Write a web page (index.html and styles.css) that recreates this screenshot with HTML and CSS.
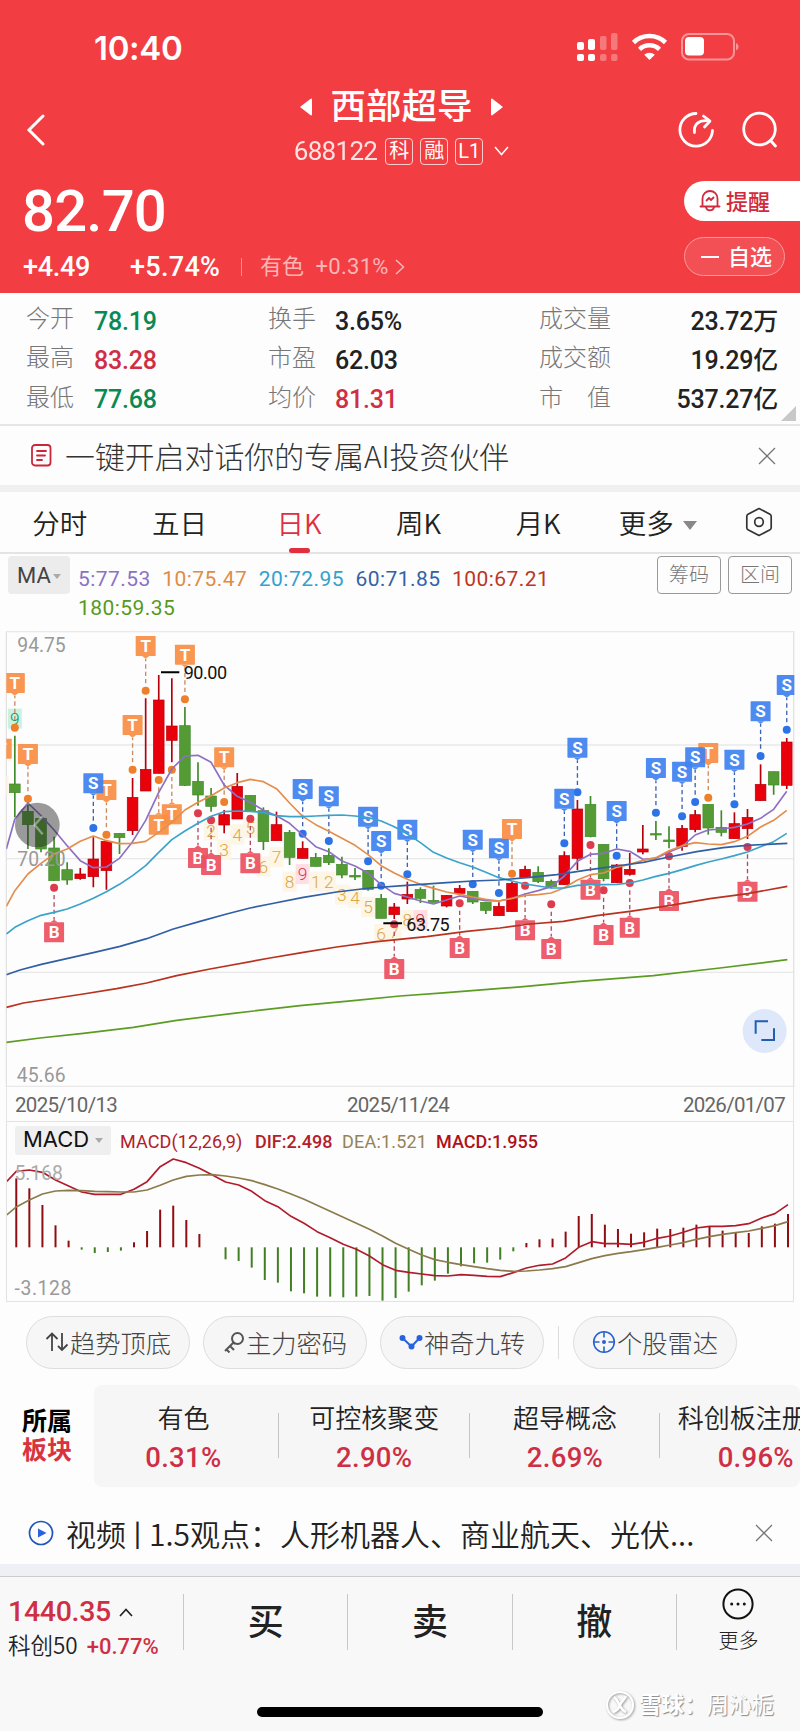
FILE: index.html
```html
<!DOCTYPE html>
<html lang="zh-CN">
<head>
  <meta charset="utf-8">
  <title>西部超导 688122</title>
  <link rel="stylesheet" href="styles.css">
</head>
<body>
  <header class="header">
    <div class="status">
      <span class="time">10:40</span>
      <svg class="status-icons" width="166" height="32" viewBox="0 0 166 32" fill="#fff">
        <rect x="1" y="11" width="7" height="8" rx="2"/>
        <rect x="12" y="8" width="7" height="11" rx="2"/>
        <rect x="1" y="23" width="7" height="7" rx="2"/>
        <rect x="12" y="23" width="7" height="7" rx="2"/>
        <g opacity=".3">
          <rect x="24" y="5" width="6.5" height="14" rx="2"/>
          <rect x="35" y="2" width="6.5" height="17" rx="2"/>
          <rect x="24" y="23" width="6.5" height="7" rx="2"/>
          <rect x="35" y="23" width="6.5" height="7" rx="2"/>
        </g>
        <path d="M73.500 29l-5.300-5.200a7.600 7.600 0 0 1 10.600 0z"/>
        <g fill="none" stroke="#fff" stroke-width="4.600">
          <path d="M57.500 11.500a23 23 0 0 1 32 0"/>
          <path d="M63.500 18.300a14.500 14.500 0 0 1 20 0"/>
        </g>
        <rect x="106" y="3" width="52" height="25.500" rx="7" fill="none" stroke="#fff" stroke-width="2" opacity=".45"/>
        <rect x="109" y="6" width="19" height="18.500" rx="4"/>
        <path d="M160 12a4 4 0 0 1 0 7.500z" opacity=".45"/>
      </svg>
    </div>
    <div class="nav">
      <svg class="back" width="20" height="32" viewBox="0 0 20 32" fill="none" stroke="#fff" stroke-width="3" stroke-linecap="round"><path d="M17 2L3 16l14 14"/></svg>
      <div class="title-block">
        <div class="title">
          <svg width="12" height="18" viewBox="0 0 12 18" fill="#fff"><path d="M11 0.500q1 0 1 1v15q0 1-1 1L.6 9.600q-.8-.6 0-1.200z"/></svg>
          <h1>西部超导</h1>
          <svg width="12" height="18" viewBox="0 0 12 18" fill="#fff"><path d="M1 .5Q0 .5 0 1.500v15q0 1 1 1L11.400 9.600q.8-.6 0-1.200z"/></svg>
        </div>
        <div class="code">
          <span class="num">688122</span>
          <span class="tag">科</span><span class="tag">融</span><span class="tag tag-l">L1</span>
          <svg width="15" height="10" viewBox="0 0 15 10" fill="none" stroke="#fff" stroke-width="1.500"><path d="M1 1l6.500 7.500L14 1"/></svg>
        </div>
      </div>
      <div class="nav-icons">
        <svg width="38" height="38" viewBox="0 0 38 38" fill="none" stroke="#fff" stroke-width="2.800" stroke-linecap="round">
          <path d="M19 2.500A16.300 16.300 0 1 0 35.500 19.500"/>
          <path d="M17.500 21.500c-1-8 4-12.500 13-11.800"/>
          <path d="M26.500 5l6.500 5-5.500 6" stroke-linejoin="round"/>
        </svg>
        <svg width="38" height="38" viewBox="0 0 38 38" fill="none" stroke="#fff" stroke-width="2.800" stroke-linecap="round">
          <circle cx="18.500" cy="18" r="15.800"/><path d="M29.500 29.500l5 5.500"/>
        </svg>
      </div>
    </div>
    <div class="quote">
      <div>
        <div class="price">82.70</div>
        <div class="change">
          <span class="diff">+4.49</span><span class="pct">+5.74%</span>
          <span class="industry">有色 <i>+0.31%</i></span>
          <svg width="10" height="16" viewBox="0 0 10 16" fill="none" stroke="#fff" stroke-width="1.400" opacity=".65"><path d="M1 1l7.500 7L1 15"/></svg>
        </div>
      </div>
      <div class="actions">
        <div class="remind">
          <svg width="22" height="23" viewBox="0 0 22 23" fill="none" stroke="#d02a3c" stroke-width="1.800" stroke-linecap="round" stroke-linejoin="round">
            <path d="M3.500 16.500V9.500a7.500 7.500 0 0 1 15 0v7M1.500 17.500h19M7 18.500a4.200 4.200 0 0 0 8 0M7.500 11.500l2.500-2.500 2 2 2.500-2.500"/>
          </svg>
          提醒
        </div>
        <div class="watch"><span class="minus"></span>自选</div>
      </div>
    </div>
  </header>

  <section class="stats">
    <label>今开</label><b class="green">78.19</b><label>换手</label><b>3.65%</b><label>成交量</label><b class="end">23.72万</b>
    <label>最高</label><b class="red">83.28</b><label>市盈</label><b>62.03</b><label>成交额</label><b class="end">19.29亿</b>
    <label>最低</label><b class="green">77.68</b><label>均价</label><b class="red">81.31</b><label>市　值</label><b class="end">537.27亿</b>
    <span class="corner"></span>
  </section>

  <section class="banner">
    <svg width="21" height="23" viewBox="0 0 21 23" fill="none" stroke="#c9283c" stroke-width="1.800" stroke-linecap="round">
      <rect x="1" y="1" width="18.500" height="20.500" rx="3"/><path d="M6 7h9M6 11.500h8M6 16h5"/>
    </svg>
    <span>一键开启对话你的专属AI投资伙伴</span>
    <svg class="close" width="18" height="18" viewBox="0 0 18 18" stroke="#777" stroke-width="1.300"><path d="M1 1l16 16M17 1L1 17"/></svg>
  </section>

  <nav class="tabs">
    <span>分时</span>
    <span>五日</span>
    <span class="active">日K</span>
    <span>周K</span>
    <span>月K</span>
    <span>更多<i class="caret"></i></span>
    <svg width="30" height="30" viewBox="0 0 30 30" fill="none" stroke="#333" stroke-width="1.700" stroke-linejoin="round">
      <path d="M15 1.500l11 5.800q1.200.7 1.200 2v11.400q0 1.300-1.200 2L15 28.500 4 22.700q-1.200-.7-1.200-2V9.300q0-1.300 1.200-2z"/><circle cx="15" cy="15" r="4.300"/>
    </svg>
  </nav>

  <section class="legend">
    <div class="chip">MA<i class="caret small"></i></div>
    <div class="ma">
      <span class="ma5">5:77.53</span><span class="ma10">10:75.47</span><span class="ma20">20:72.95</span><span class="ma60">60:71.85</span><span class="ma100">100:67.21</span><span class="ma180">180:59.35</span>
    </div>
    <div class="box-btn">筹码</div>
    <div class="box-btn">区间</div>
  </section>

  <svg id="kline" class="kline" viewBox="0 0 2400 1404"></svg>

  <div class="dates"><span>2025/10/13</span><span>2025/11/24</span><span>2026/01/07</span></div>

  <section class="macd">
    <div class="macd-head">
      <div class="macd-chip">MACD<i class="caret small"></i></div>
      <span class="p1">MACD(12,26,9)</span><span class="p2">DIF:2.498</span><span class="p3">DEA:1.521</span><span class="p4">MACD:1.955</span>
    </div>
    <svg id="macd" viewBox="20 594 2360 430"></svg>
  </section>

  <section class="tools">
    <div class="tool">
      <svg width="24" height="22" viewBox="0 0 24 22" fill="none" stroke="#444" stroke-width="1.800"><path d="M1.500 8l5.500-5.500L12.500 8M7 3v17M17 2v17.500M22.500 13.500L17 19l-4-4"/></svg>趋势顶底
    </div>
    <div class="tool">
      <svg width="22" height="22" viewBox="0 0 22 22" fill="none" stroke="#555" stroke-width="2"><circle cx="14.500" cy="7.500" r="5.500"/><path d="M10.500 11.500L2 20M7 15l4 4M3.500 18.500l3 3M10.500 11.500l1.500 1.500"/></svg>主力密码
    </div>
    <div class="tool">
      <svg width="24" height="22" viewBox="0 0 24 22" fill="#2a62dd" stroke="#2a62dd" stroke-width="2"><path d="M3.500 7l9 8.500L20.500 7" fill="none"/><circle cx="3.500" cy="7" r="2"/><circle cx="12.500" cy="15.500" r="2"/><circle cx="20.500" cy="7" r="2"/></svg>神奇九转
    </div>
    <div class="bar"></div>
    <div class="tool">
      <svg width="24" height="24" viewBox="0 0 24 24" fill="none" stroke="#2a62cf" stroke-width="1.600"><circle cx="12" cy="12" r="10.300"/><path d="M12 1.500v6M12 16.500v6M1.500 12h6M16.500 12h6"/><circle cx="12" cy="12" r="1.200" fill="#2a62cf"/></svg>个股雷达
    </div>
  </section>

  <section class="sectors">
    <div class="sector-label">所属<br><em>板块</em></div>
    <div class="sector-list">
      <div class="sector"><span>有色</span><b>0.31%</b></div>
      <div class="sector"><span>可控核聚变</span><b>2.90%</b></div>
      <div class="sector"><span>超导概念</span><b>2.69%</b></div>
      <div class="sector"><span class="long">科创板注册</span><b>0.96%</b></div>
    </div>
  </section>

  <section class="video">
    <svg width="26" height="26" viewBox="0 0 26 26"><circle cx="13" cy="13" r="11.500" fill="none" stroke="#1f56b8" stroke-width="1.700"/><path d="M10 8.500l8.500 4.500-8.500 4.500z" fill="#2a62dd"/></svg>
    <span>视频<i>丨</i>1.5观点：人形机器人、商业航天、光伏...</span>
    <svg class="close" width="18" height="18" viewBox="0 0 18 18" stroke="#777" stroke-width="1.300"><path d="M1 1l16 16M17 1L1 17"/></svg>
  </section>

  <footer class="footer">
    <div class="trade">
      <div class="index">
        <div class="index-top">1440.35<svg width="14" height="9" viewBox="0 0 14 9" fill="none" stroke="#222" stroke-width="1.700"><path d="M1 8l6-6.500L13 8"/></svg></div>
        <div class="index-sub">科创50<b>+0.77%</b></div>
      </div>
      <div class="btn">买</div>
      <div class="btn">卖</div>
      <div class="btn">撤</div>
      <div class="more">
        <svg width="32" height="32" viewBox="0 0 32 32" fill="#111"><circle cx="16" cy="16" r="14.600" fill="none" stroke="#111" stroke-width="2"/><circle cx="9.700" cy="16" r="1.500"/><circle cx="16" cy="16" r="1.500"/><circle cx="22.300" cy="16" r="1.500"/></svg>
        更多
      </div>
    </div>
    <div class="home-bar"></div>
    <div class="watermark">
      <svg width="30" height="30" viewBox="0 0 30 30" fill="none" stroke="#fff" stroke-width="2"><circle cx="15" cy="15" r="13"/><path d="M9 7c3 2 4 5 5.500 8 1.500 3 3 6 6.500 7M21 6c-2 4-5 6-6 9s-4 6-7 7" stroke-width="2.600"/></svg>
      <b>雪球：</b>周沁栀
    </div>
  </footer>
  <script src="chart.js"></script>
</body>
</html>
```
FILE: styles.css
```css
* {
  box-sizing: border-box;
}
body {
  margin: 0;
  width: 800px;
  height: 1731px;
  overflow: hidden;
  background: #fdfdfd;
  color: #222;
  font-family: Roboto, "Noto Sans CJK SC", sans-serif;
}
svg {
  display: block;
  flex: none;
}
i, em {
  font-style: normal;
}
.red { color: #cf2f44; }
.green { color: #098a53; }

/* header */
.header {
  height: 293px;
  background: #f23e42;
  color: #fff;
}
.status {
  height: 94px;
  padding: 0 57px 0 94px;
  display: flex;
  justify-content: space-between;
  align-items: center;
}
.status-icons {
  margin-right: 1px;
}
.time {
  font: 600 33px/40px Inter, sans-serif;
  letter-spacing: -0.3px;
  padding-top: 2px;
}
.nav {
  height: 74px;
  display: flex;
  justify-content: space-between;
  padding: 0 21px 0 26px;
}
.back {
  margin-top: 20px;
}
.title-block {
  padding-left: 80px;
  margin-top: -9px;
}
.title {
  display: flex;
  align-items: center;
  justify-content: center;
  gap: 18px;
  height: 44px;
}
.title h1 {
  margin: 0;
  font-size: 35.500px;
  line-height: 44px;
  font-weight: 500;
}
.code {
  display: flex;
  align-items: center;
  height: 44px;
  gap: 7px;
}
.code .num {
  font-size: 26px;
  letter-spacing: -0.7px;
  opacity: .85;
  margin-right: 1px;
}
.tag {
  width: 28px;
  height: 27px;
  border: 1px solid #fcc;
  border-radius: 4px;
  font-size: 20px;
  line-height: 25px;
  text-align: center;
}
.code svg {
  margin-left: 4px;
}
.nav-icons {
  display: flex;
  gap: 26px;
  padding-top: 17px;
}
.quote {
  display: flex;
  justify-content: space-between;
}
.price {
  font-size: 58px;
  line-height: 60px;
  font-weight: 500;
  letter-spacing: -0.800px;
  padding: 13px 0 0 22px;
}
.change {
  display: flex;
  align-items: center;
  font-size: 27px;
  font-weight: 500;
  line-height: 30px;
  padding: 11px 0 0 23px;
}
.change .diff {
  width: 107px;
  letter-spacing: -0.3px;
}
.change .pct {
  width: 111px;
  letter-spacing: 0.3px;
}
.industry {
  border-left: 1px solid #f98f91;
  padding-left: 18px;
  line-height: 18px;
  font-size: 22px;
  font-weight: 400;
  color: #fbb5b7;
}
.industry i {
  margin: 0 6px 0 6px;
  letter-spacing: 0.3px;
}
.actions {
  width: 116px;
  padding-top: 13px;
  font-weight: 500;
  font-size: 22px;
}
.remind {
  display: flex;
  align-items: center;
  gap: 5px;
  height: 40px;
  padding: 0 0 2px 15px;
  border-radius: 20px 0 0 20px;
  background: #fff;
  color: #d02a3c;
}
.watch {
  display: flex;
  align-items: center;
  width: 101px;
  height: 39px;
  margin-top: 16px;
  padding: 0 0 3px 16px;
  border: 1px solid #f99;
  border-radius: 20px;
  background: #f25055;
}
.minus {
  width: 18px;
  height: 2px;
  margin: 3px 9px 0 0;
  background: #fff;
}

/* quote details */
.stats {
  position: relative;
  height: 133px;
  display: grid;
  grid-template-columns: 68px 174px 67px 204px 73px 1fr;
  grid-template-rows: repeat(3, 39.300px);
  padding: 8px 22px 0 26px;
  align-items: center;
  border-bottom: 2px solid #e6e6e6;
  font-size: 25px;
}
.stats label {
  font-size: 24px;
  font-weight: 300;
  color: #777;
  line-height: 36px;
  padding-bottom: 3px;
  white-space: nowrap;
}
.stats b {
  font-weight: 500;
  letter-spacing: -0.200px;
  line-height: 36px;
  padding-top: 2px;
  white-space: nowrap;
}
.stats .end {
  text-align: right;
}
.corner {
  position: absolute;
  right: 4px;
  bottom: 3px;
  border-left: 15px solid transparent;
  border-bottom: 15px solid #c8c8c8;
}

.banner {
  display: flex;
  align-items: center;
  height: 66px;
  padding: 0 24px 0 31px;
  border-bottom: 7px solid #f0f0f0;
  font-size: 29.900px;
  font-weight: 300;
  color: #333;
}
.banner span {
  margin: -2px auto 0 13px;
  font-family: "Noto Sans CJK SC", sans-serif;
}

/* period tabs */
.tabs {
  display: flex;
  align-items: center;
  height: 62px;
  border-bottom: 2px solid #e4e4e4;
  font-size: 27.500px;
  line-height: 60px;
}
.tabs span {
  position: relative;
  width: 119.600px;
  text-align: center;
  font-family: "Noto Sans CJK SC", sans-serif;
  font-weight: 350;
}
.tabs svg {
  margin-left: 26px;
}
.tabs .active {
  color: #e03040;
}
.tabs .active::after {
  content: "";
  position: absolute;
  left: 50%;
  bottom: -1px;
  width: 21px;
  height: 5px;
  margin-left: -10px;
  border-radius: 3px;
  background: #e03040;
}
.caret {
  display: inline-block;
  margin-left: 9px;
  vertical-align: 4px;
  border: 7px solid transparent;
  border-top: 9px solid #888;
  border-bottom: 0;
}
.caret.small {
  margin-left: 2px;
  border-width: 5px 4.500px 0;
  border-top-color: #aaa;
}

.legend {
  display: flex;
  height: 65px;
  padding: 2px 8px 0;
}
.chip {
  width: 62px;
  height: 38px;
  border-radius: 4px;
  background: #ececec;
  color: #444;
  font-size: 22px;
  line-height: 39px;
  text-align: center;
  white-space: nowrap;
}
.ma {
  width: 500px;
  margin: 9px auto 0 8px;
  display: flex;
  flex-wrap: wrap;
  column-gap: 11.500px;
  font-size: 21px;
  letter-spacing: 0.450px;
  line-height: 28.500px;
}
.ma5 { color: #8a72c4; }
.ma10 { color: #e08c45; }
.ma20 { color: #35a0cd; }
.ma60 { color: #3262a8; }
.ma100 { color: #bd3524; }
.ma180 { color: #579a1c; }
.box-btn {
  width: 64px;
  height: 38px;
  margin-left: 7px;
  border: 1px solid #999;
  border-radius: 4px;
  color: #777;
  font-size: 20px;
  font-weight: 300;
  line-height: 37px;
  text-align: center;
}

/* charts */
.kline {
  width: 800px;
  height: 468px;
}
.kline text, #macd text {
  font-family: Roboto, sans-serif;
}
.dates {
  display: flex;
  justify-content: space-between;
  height: 34px;
  margin: 0 6px;
  padding: 0 8px 0 8px;
  border: 1px solid #e6e6e6;
  border-width: 0 1px;
  font-size: 20.500px;
  letter-spacing: -0.700px;
  line-height: 37px;
  color: #666;
}
.dates span:nth-child(2) {
  margin-left: -4px;
}
.macd {
  height: 181px;
  margin: 0 6px;
  border: 1px solid #e2e2e2;
}
.macd svg {
  width: 786.700px;
  height: 143.300px;
}
.macd-head {
  display: flex;
  height: 36px;
  padding: 4px 0 0 8px;
  font-size: 18px;
  line-height: 32px;
  white-space: nowrap;
}
.macd-chip {
  width: 96px;
  height: 29px;
  border-radius: 3px;
  background: #efefef;
  color: #111;
  font: 400 22px/27px Inter, sans-serif;
  text-align: center;
}
.macd-chip .caret {
  margin-left: 6px;
}
.macd-head span {
  font-weight: 500;
}
.macd-head .p1 { width: 135px; margin-left: 9px; color: #b22029; font-weight: 400; letter-spacing: 0.100px; }
.macd-head .p2 { width: 87px; color: #b22029; }
.macd-head .p3 { width: 94px; color: #958357; font-weight: 400; letter-spacing: 0.200px; }
.macd-head .p4 { color: #b0101a; }

/* tools */
.tools {
  display: flex;
  height: 83px;
  padding: 14px 0 0 26px;
  gap: 13px;
}
.tool {
  display: flex;
  align-items: center;
  justify-content: center;
  gap: 1px;
  width: 164px;
  height: 53px;
  border: 1px solid #ddd;
  border-radius: 27px;
  background: #f6f6f6;
  color: #444;
  font-size: 25.300px;
  font-weight: 300;
  padding-bottom: 1px;
}
.bar {
  width: 1px;
  height: 33px;
  margin: 10px 1px 0;
  background: #ddd;
}

.sectors {
  display: flex;
  height: 102px;
  overflow: hidden;
}
.sector-label {
  flex: none;
  width: 94px;
  padding: 22px 0 0 22px;
  color: #000;
  font-size: 25px;
  font-weight: 700;
  line-height: 29px;
}
.sector-label em {
  color: #d8333f;
}
.sector-list {
  display: flex;
  width: 706px;
  overflow: hidden;
  border-radius: 8px;
  background: #f6f6f6;
}
.sector {
  position: relative;
  flex: none;
  width: 190.800px;
  margin-left: -6px;
  padding-top: 15px;
  display: flex;
  flex-direction: column;
  align-items: center;
  white-space: nowrap;
}
.sector + .sector {
  margin-left: 0;
}
.sector::after {
  content: "";
  position: absolute;
  right: 0;
  top: 28px;
  width: 1px;
  height: 45px;
  background: #c4c4c4;
}
.sector span {
  font-size: 26px;
  font-weight: 350;
  line-height: 38px;
}
.sector .long {
  padding-right: 26px;
}
.sector b {
  font-size: 27.500px;
  font-weight: 500;
  letter-spacing: 0.300px;
  line-height: 40px;
  color: #cf2f44;
}

.video {
  display: flex;
  align-items: center;
  height: 89px;
  padding: 15px 27px 0 28px;
  border-bottom: 12px solid #efeff6;
  font-family: "Noto Sans CJK SC", sans-serif;
  font-size: 30px;
  font-weight: 350;
}
.video span {
  margin: -1px auto 0 12px;
  white-space: nowrap;
}
.video i {
  margin: 0 -3.500px;
}

/* footer */
.footer {
  position: relative;
  height: 155px;
  border-top: 1px solid #ccc;
  background: #f8f8f8;
}
.trade {
  display: flex;
  height: 73px;
  padding-top: 17px;
}
.index {
  width: 183px;
  padding: 2px 0 0 8px;
}
.index-top {
  display: flex;
  align-items: center;
  gap: 8px;
  font-size: 28.500px;
  font-weight: 500;
  line-height: 32px;
  letter-spacing: -0.300px;
  color: #cf2f44;
}
.index-sub {
  font: 350 22.500px/32px "Noto Sans CJK SC", sans-serif;
  white-space: nowrap;
}
.index-sub b {
  font-family: Roboto, sans-serif;
  font-size: 22px;
  font-weight: 500;
  letter-spacing: 0;
  margin-left: 9px;
  color: #cf2f44;
}
.btn {
  width: 164.300px;
  height: 56px;
  border-left: 1px solid #c8c8c8;
  font-size: 36px;
  font-weight: 500;
  line-height: 59px;
  text-align: center;
}
.more {
  flex: 1;
  height: 56px;
  border-left: 1px solid #c8c8c8;
  display: flex;
  flex-direction: column;
  align-items: center;
  gap: 6px;
  font-size: 20px;
  font-weight: 300;
  line-height: 30px;
}
.more svg {
  margin-top: -6px;
}
.home-bar {
  width: 286px;
  height: 10px;
  margin: 57px 0 0 257px;
  border-radius: 5px;
  background: #000;
}
.watermark {
  position: absolute;
  left: 605px;
  bottom: 10px;
  display: flex;
  align-items: center;
  font-size: 22.500px;
  line-height: 32px;
  color: #fff;
  text-shadow: 1px 1px 1px #888;
  white-space: nowrap;
}
.watermark svg {
  margin-right: 4px;
  filter: drop-shadow(1px 1px 1px #999);
}
```
FILE: chart.js
```js
// all chart coordinates are in 3x device pixels
const STEP = 39.25;
const cx = i => 44.5 + STEP * i;

function group(list) {
  return list.join("");
}
function line(points, color, width) {
  return `<polyline points="${points.map(p => p.join(",")).join(" ")}" fill="none" stroke="${color}" stroke-width="${width || 5}" stroke-linejoin="round"/>`;
}
function series(start, values, offset) {
  return [[19, start]].concat(values.map((v, i) => [cx(i) + (offset || 0), v]));
}

// [direction, high, body top, body bottom, low]
const candles = [
  ["g",350,495,521,595],["g",550,577,617,690],["g",598,598,690,700],["g",653,687,785,785],["g",730,752,783,797],
  ["r",747,765,779,782],["r",655,720,773,805],["r",667,667,755,812],["g",643,643,656,705],["r",477,535,635,648],
  ["r",238,451,516,516],["r",168,243,463,463],["r",178,321,364,430],["g",264,320,499,501],["g",430,487,528,560],
  ["g",507,531,562,578],["r",573,587,618,643],["r",462,502,600,600],["g",529,529,577,577],["g",565,575,668,693],
  ["r",578,617,665,665],["g",633,640,715,738],["r",667,688,718,718],["g",702,715,742,742],["g",688,709,731,738],
  ["g",713,736,768,778],["g",747,769,774,783],["g",754,754,811,815],["g",825,838,898,898],["r",852,864,887,900],
  ["r",788,826,840,855],["g",805,811,838,852],["g",800,844,850,850],["r",828,829,861,865],["r",798,808,823,823],
  ["g",817,817,849,855],["g",850,850,874,885],["r",850,862,890,890],["r",788,793,878,878],["r",740,751,775,775],
  ["g",742,760,788,792],["g",782,787,803,808],["r",697,710,797,797],["r",543,570,718,753],["g",531,556,653,655],
  ["g",676,676,779,787],["r",735,738,791,791],["r",702,751,766,770],["r",618,690,699,706],["g",606,644,647,663],
  ["g",622,663,668,688],["r",618,628,682,695],["r",573,587,632,640],["g",556,556,627,647],["g",574,625,640,652],
  ["r",580,614,659,659],["r",570,595,629,660],["r",436,496,545,545],["g",458,458,498,527],["r",357,369,499,510]
];

const ma5 = [600,552,590,633,680,725,746,744,718,668,604,520,450,411,409,430,498,532,550,574,590,613,648,683,698,726,741,762,797,823,834,846,855,843,831,838,845,846,838,825,815,803,771,727,706,703,690,697,721,718,699,683,648,633,630,625,615,598,571,517];
const ma10 = [815,765,733,705,690,667,651,665,674,673,667,640,610,573,550,530,507,491,481,488,509,552,592,617,637,658,679,707,740,762,781,796,808,819,826,834,841,846,838,829,827,822,806,783,767,762,745,736,724,716,695,680,671,675,677,668,652,624,604,574];
const ma20 = [925,905,889,880,870,855,838,818,796,770,740,700,662,636,613,592,578,576,577,581,590,593,593,591,589,588,591,596,606,623,645,671,700,717,731,744,760,776,786,795,801,807,807,799,797,797,796,792,783,772,763,752,740,729,720,710,699,683,668,643];
const ma60 = [[19,1067],[60,1053],[124,1036],[200,1019],[280,1001],[360,982],[440,959],[520,930],[600,907],[680,885],[750,867],[810,855],[910,835],[1010,819],[1110,807],[1220,799],[1340,791],[1420,786],[1497,783],[1590,775],[1670,767],[1770,752],[1850,741],[1930,730],[2007,714],[2090,698],[2170,686],[2240,679],[2362,673]];
const ma100 = [[19,1165],[70,1152],[150,1140],[250,1125],[350,1109],[440,1092],[530,1070],[630,1050],[810,1017],[910,1000],[1010,984],[1130,968],[1280,953],[1400,937],[1500,927],[1590,915],[1690,907],[1790,890],[1890,877],[2007,860],[2130,839],[2243,824],[2362,802]];
const ma180 = [[19,1270],[120,1257],[250,1243],[400,1225],[530,1204],[700,1183],[900,1160],[1060,1145],[1200,1131],[1340,1121],[1570,1103],[1740,1087],[1960,1070],[2160,1047],[2362,1022]];

// [label, candle, dot y, 1 = flag under the dot]
const flags = [
  ["T",-1,523,0],["T",0,326,0],["T",1,539,0],["T",10,215,0],["T",13,241,0],["T",9,452,0],["T",7,647,0],["S",6,627,0],
  ["T",12,452,1],["T",11,483,1],["T",16,549,0],["B",3,806,1],["B",14,583,1],["B",15,604,1],["B",18,599,1],
  ["S",22,644,0],["S",24,666,0],["S",27,727,0],["S",28,800,0],["S",30,766,0],["S",35,796,0],["S",37,822,0],["T",38,764,0],
  ["B",29,916,1],["B",34,853,1],["B",39,800,1],["S",43,520,0],["S",42,673,0],["S",46,710,0],["S",49,581,0],
  ["T",53,536,0],["S",52,549,0],["S",51,592,0],["S",55,556,0],["S",57,411,0],["S",59,332,0],
  ["B",41,856,1],["B",45,814,1],["B",44,678,1],["B",47,792,1],["B",50,712,1],["B",56,684,1]
];
const flagColor = { T: "#f98f45", S: "#4183f0", B: "#ec5161" };
const dotColor = { T: "#ee7f2b", S: "#2b73e6", B: "#dd3b4e" };
const stemColor = { T: "#c98a64", S: "#3f62b0", B: "#b04a62" };

// [digit, candle, y, highlight]
const nine = [
  ["8",-1,500],["9",0,299,"g"],["2",12,590],["2",15,634],["3",16,692],["4",17,646],["5",18,627],["6",19,742],
  ["7",20,714],["8",21,788],["9",22,765,"r"],["1",23,788],["2",24,788],["3",25,827],["4",26,836],["5",27,864],
  ["6",28,945],["7",29,937],["8",30,903],["9",31,903,"r"]
];

function drawCandle(c, i) {
  const color = c[0] === "r" ? "#e8000b" : "#559b35";
  const edge = c[0] === "r" ? "#b5000c" : "#3f8a2a";
  const x = cx(i);
  return `<path d="M${x} ${c[1]}V${c[4]}" stroke="${edge}" stroke-width="5"/>
    <rect x="${x - 16}" y="${c[2]}" width="32" height="${Math.max(c[3] - c[2], 4)}" fill="${color}" stroke="${edge}" stroke-width="2"/>`;
}
function drawFlag(f) {
  const x = cx(f[1]), y = f[2], dir = f[3] ? 1 : -1, box = y + dir * 134, tip = box - dir * 38, base = box - dir * 30;
  return `<path d="M${x} ${y + dir * 22}V${tip}" stroke="${stemColor[f[0]]}" stroke-width="4" stroke-dasharray="13 9"/>
    <circle cx="${x}" cy="${y}" r="12" fill="${dotColor[f[0]]}"/>
    <g opacity=".93"><rect x="${x - 30}" y="${box - 30}" width="60" height="60" rx="2" fill="${flagColor[f[0]]}"/>
    <path d="M${x - 11} ${base}L${x} ${tip}L${x + 11} ${base}z" fill="${flagColor[f[0]]}"/></g>
    <text x="${x}" y="${box + 18}" font-size="51" font-weight="700" fill="#fff" text-anchor="middle">${f[0]}</text>`;
}
function drawNine(n) {
  const back = { g: "#c9f2e2", r: "#ffdfe4" }[n[3]] || "#fdf5e6";
  const color = { g: "#15905a", r: "#d63450" }[n[3]] || "#dca545";
  return `<rect x="${cx(n[1]) - 21}" y="${n[2] - 30}" width="42" height="60" fill="${back}"/>
    <text x="${cx(n[1])}" y="${n[2] + 19}" font-size="52" font-weight="300" fill="${color}" text-anchor="middle">${n[0]}</text>`;
}
function label(x, y, text, color, width, size) {
  return `<text x="${x}" y="${y}" font-size="${size || 58}" fill="${color}" textLength="${width}">${text}</text>`;
}

document.getElementById("kline").innerHTML = `
  <clipPath id="plot"><rect x="19" y="38" width="2364" height="1366"/></clipPath>
  ${group([38, 378, 719, 1060, 1402].map(y => `<path d="M19 ${y}H2383" stroke="#e8e8e8" stroke-width="4"/>`))}
  <path d="M19 38V1404M2381 38V1404" stroke="#e3e3e3" stroke-width="4"/>
  <g clip-path="url(#plot)">
    ${group(nine.map(drawNine))}
    ${group(candles.map(drawCandle))}
    ${group(flags.map(drawFlag))}
    ${line(series(690, ma5), "#8d70c4")}
    ${line(series(862, ma10), "#e38e4d")}
    ${line(series(945, ma20), "#3aa3cb")}
    ${line(ma60, "#315fa6")}
    ${line(ma100, "#b8321f")}
    ${line(ma180, "#5c9c22")}
  </g>
  ${label(52, 98, "94.75", "#999", 145)}
  ${label(52, 742, "70.20", "#999", 145)}
  ${label(50, 1389, "45.66", "#999", 147)}
  <path d="M483 160H538M1150 913H1206" stroke="#000" stroke-width="6"/>
  ${label(551, 181, "90.00", "#111", 130, 54)}
  ${label(1219, 935, "63.75", "#111", 130, 54)}
  <circle cx="112" cy="618" r="67" fill="#222" opacity=".45"/>
  <path d="M128 592L104 618L128 646" fill="none" stroke="#fff" stroke-width="7" opacity=".4"/>
  <circle cx="2294" cy="1236" r="66" fill="#dfe7fa"/>
  <path d="M2267 1244V1207H2304M2322 1228V1263H2284" fill="none" stroke="#1f5fae" stroke-width="6"/>`;

const bars = [655,685,735,796,842,869,879,876,872,847,813,749,737,780,822,862,898,903,923,960,968,994,1000,1010,1010,1012,1010,1008,1022,1014,995,976,962,941,919,910,908,899,874,849,838,836,815,768,762,794,807,821,817,806,807,803,794,801,812,817,819,799,791,762];
const dif = [634,630,637,660,678,696,703,703,703,688,665,620,597,608,625,645,666,675,694,722,740,769,790,815,833,853,868,888,914,931,937,942,947,948,944,946,949,950,938,924,916,912,894,862,845,851,851,853,847,835,828,817,804,799,799,797,791,774,761,734];
const dea = [741,720,702,693,691,692,694,695,696,696,690,676,660,649,645,644,648,654,662,674,687,702,718,736,754,772,790,808,828,850,868,885,899,907,914,920,926,931,934,933,930,926,920,908,896,887,880,875,869,862,855,848,838,830,823,818,813,805,797,785];

document.getElementById("macd").innerHTML = `
  ${group(bars.map((v, i) => v === 862 ? "" : `<path d="M${cx(i) + 3} 862V${v}" stroke="${v < 862 ? "#8f0d12" : "#427f23"}" stroke-width="6"/>`))}
  ${line(series(664, dif, 3), "#b01c2b")}
  ${line(series(765, dea, 3), "#8c7a4c")}
  ${label(42, 660, "5.168", "#aaa", 145)}
  ${label(42, 1005, "-3.128", "#999", 171)}`;
```
